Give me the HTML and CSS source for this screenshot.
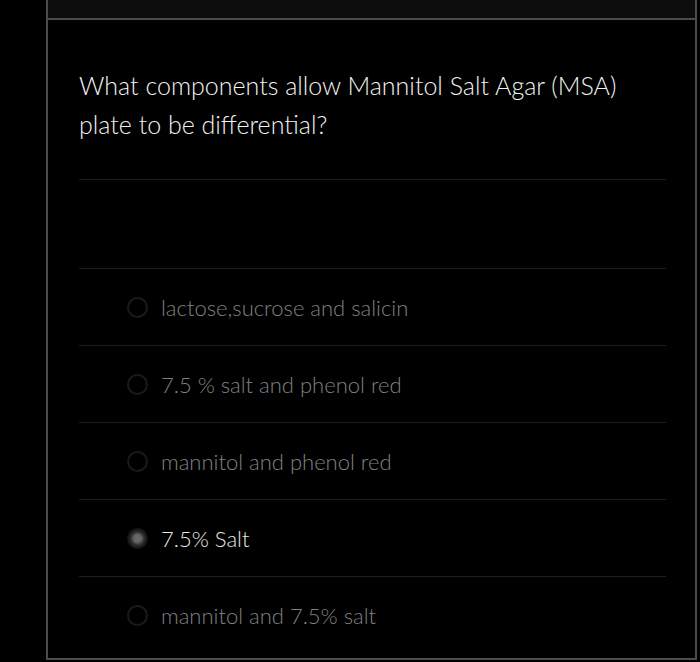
FILE: index.html
```html
<!DOCTYPE html>
<html>
<head>
<meta charset="utf-8">
<link rel="stylesheet" href="styles.css">
</head>
<body>
<div class="page">
  <div class="gutter"></div>
  <div class="frame">
    <div class="topbar"></div>
    <div class="content">
      <h1 class="question">What components allow Mannitol Salt Agar (MSA) plate to be differential?</h1>
      <div class="spacer"></div>
      <ul class="options">
        <li class="option"><span class="radio"></span><span class="label">lactose,sucrose and salicin</span></li>
        <li class="option"><span class="radio"></span><span class="label">7.5 % salt and phenol red</span></li>
        <li class="option"><span class="radio"></span><span class="label">mannitol and phenol red</span></li>
        <li class="option selected"><span class="radio"></span><span class="label">7.5% Salt</span></li>
        <li class="option last"><span class="radio"></span><span class="label">mannitol and 7.5% salt</span></li>
      </ul>
    </div>
  </div>
</div>
</body>
</html>
```

FILE: styles.css
```css
html, body {
  margin: 0;
  padding: 0;
  background: #000;
}
body {
  font-family: Lato, "Open Sans", sans-serif;
  width: 700px;
  height: 662px;
  overflow: hidden;
}
.page {
  display: flex;
  height: 662px;
}
.gutter {
  width: 46px;
  flex: none;
}
.frame {
  width: 651px;
  border-left: 2px solid #4c4c4c;
  border-right: 2px solid #4c4c4c;
  border-bottom: 2px solid #4c4c4c;
  height: 660px;
  box-sizing: border-box;
  display: flex;
  flex-direction: column;
}
.topbar {
  height: 18px;
  background: #0c0c0c;
  border-bottom: 2px solid #4c4c4c;
  flex: none;
}
.content {
  padding: 0 29px 0 31px;
}
.question {
  margin: 46px 0 0 0;
  font-weight: 300;
  font-size: 25px;
  line-height: 39px;
  color: #f2f2f2;
  padding-bottom: 35px;
  border-bottom: 1px solid #1c1c1c;
}
.spacer {
  height: 88px;
  border-bottom: 1px solid #1c1c1c;
}
.options {
  list-style: none;
  margin: 0;
  padding: 0;
}
.option {
  height: 76px;
  border-bottom: 1px solid #1e1e1e;
  display: flex;
  align-items: center;
  padding-left: 48px;
}
.option.last {
  border-bottom: none;
}
.radio {
  width: 21px;
  height: 21px;
  border: 2px solid #1a1a1a;
  border-radius: 50%;
  box-sizing: border-box;
  margin-right: 13px;
  flex: none;
}
.label {
  font-size: 22px;
  font-weight: 300;
  color: #808080;
  margin-top: 1px;
}
.selected .label {
  color: #e8e8e8;
}
.selected .radio {
  border: none;
  background: radial-gradient(circle, #6c6c6c 0, #626262 4px, #383838 6px, #202020 8px, #111 10.5px);
}
```
